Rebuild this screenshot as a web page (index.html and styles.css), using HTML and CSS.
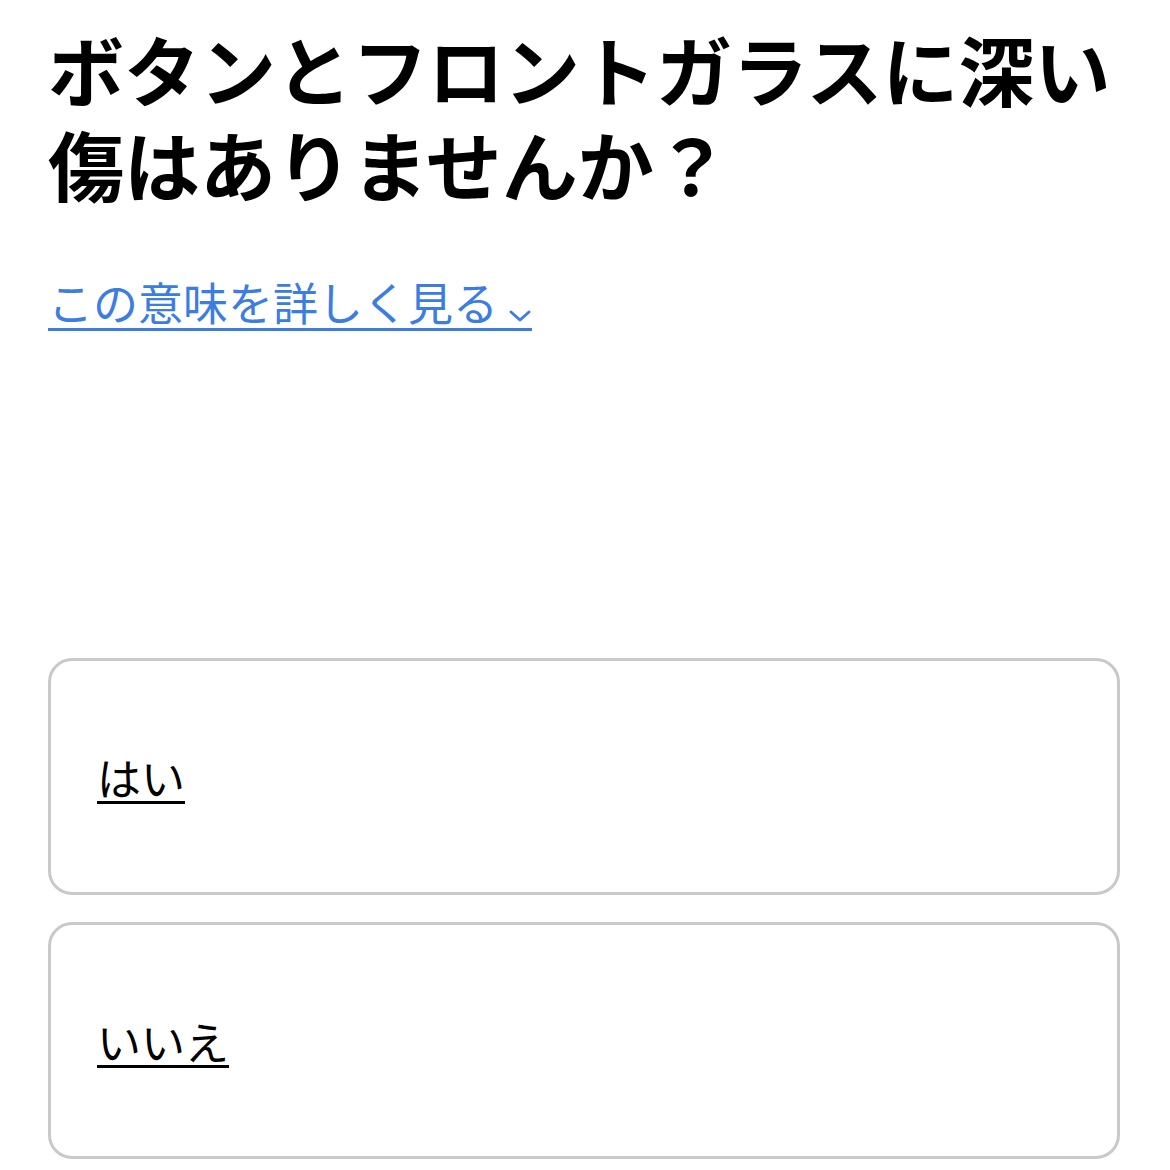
FILE: index.html
```html
<!DOCTYPE html>
<html lang="ja">
  <head>
    <meta charset="UTF-8" />
    <meta name="viewport" content="width=device-width, initial-scale=1.0" />
    <title>質問</title>
    <link rel="stylesheet" href="styles.css">
  </head>
  <body>
    <div class="question">
      <h1 class="title">ボタンとフロントガラスに深い傷はありませんか？</h1>
      <a class="more" href="#">この意味を詳しく見る<svg class="chevron" viewBox="0 0 24 14" width="24" height="14"><path d="M3 3 L12 11 L21 3" fill="none" stroke="currentColor" stroke-width="3" stroke-linecap="round" stroke-linejoin="round"/></svg></a>
    </div>

    <div class="answers">
      <div class="answer"><a href="#">はい</a></div>
      <div class="answer"><a href="#">いいえ</a></div>
    </div>
  </body>
</html>
```

FILE: styles.css
```css
body {
  margin: 0;
  padding: 0 50px 0 48px;
  background-color: #ffffff;
  font-family: "Noto Sans CJK JP", "Noto Sans", sans-serif;
  color: #000000;
}

.question {
  padding-top: 21px;
}

.title {
  margin: 0;
  font-size: 76px;
  line-height: 95px;
  font-weight: 700;
}

.more {
  display: inline-block;
  margin-top: 65px;
  font-size: 45px;
  line-height: 52px;
  color: #3b7de0;
  text-decoration: none;
  border-bottom: 3px solid #3b7de0;
}

.chevron {
  margin-left: 10px;
  vertical-align: -2px;
}

.answers {
  margin-top: 327px;
  display: flex;
  flex-direction: column;
  gap: 27px;
}

.answer {
  height: 231px;
  border: 3px solid #c9c9cb;
  border-radius: 24px;
  display: flex;
  align-items: center;
  padding-left: 46px;
}

.answer a {
  font-size: 44px;
  color: #000000;
  text-decoration: underline;
  text-decoration-thickness: 3px;
  text-underline-offset: 5px;
}
```
